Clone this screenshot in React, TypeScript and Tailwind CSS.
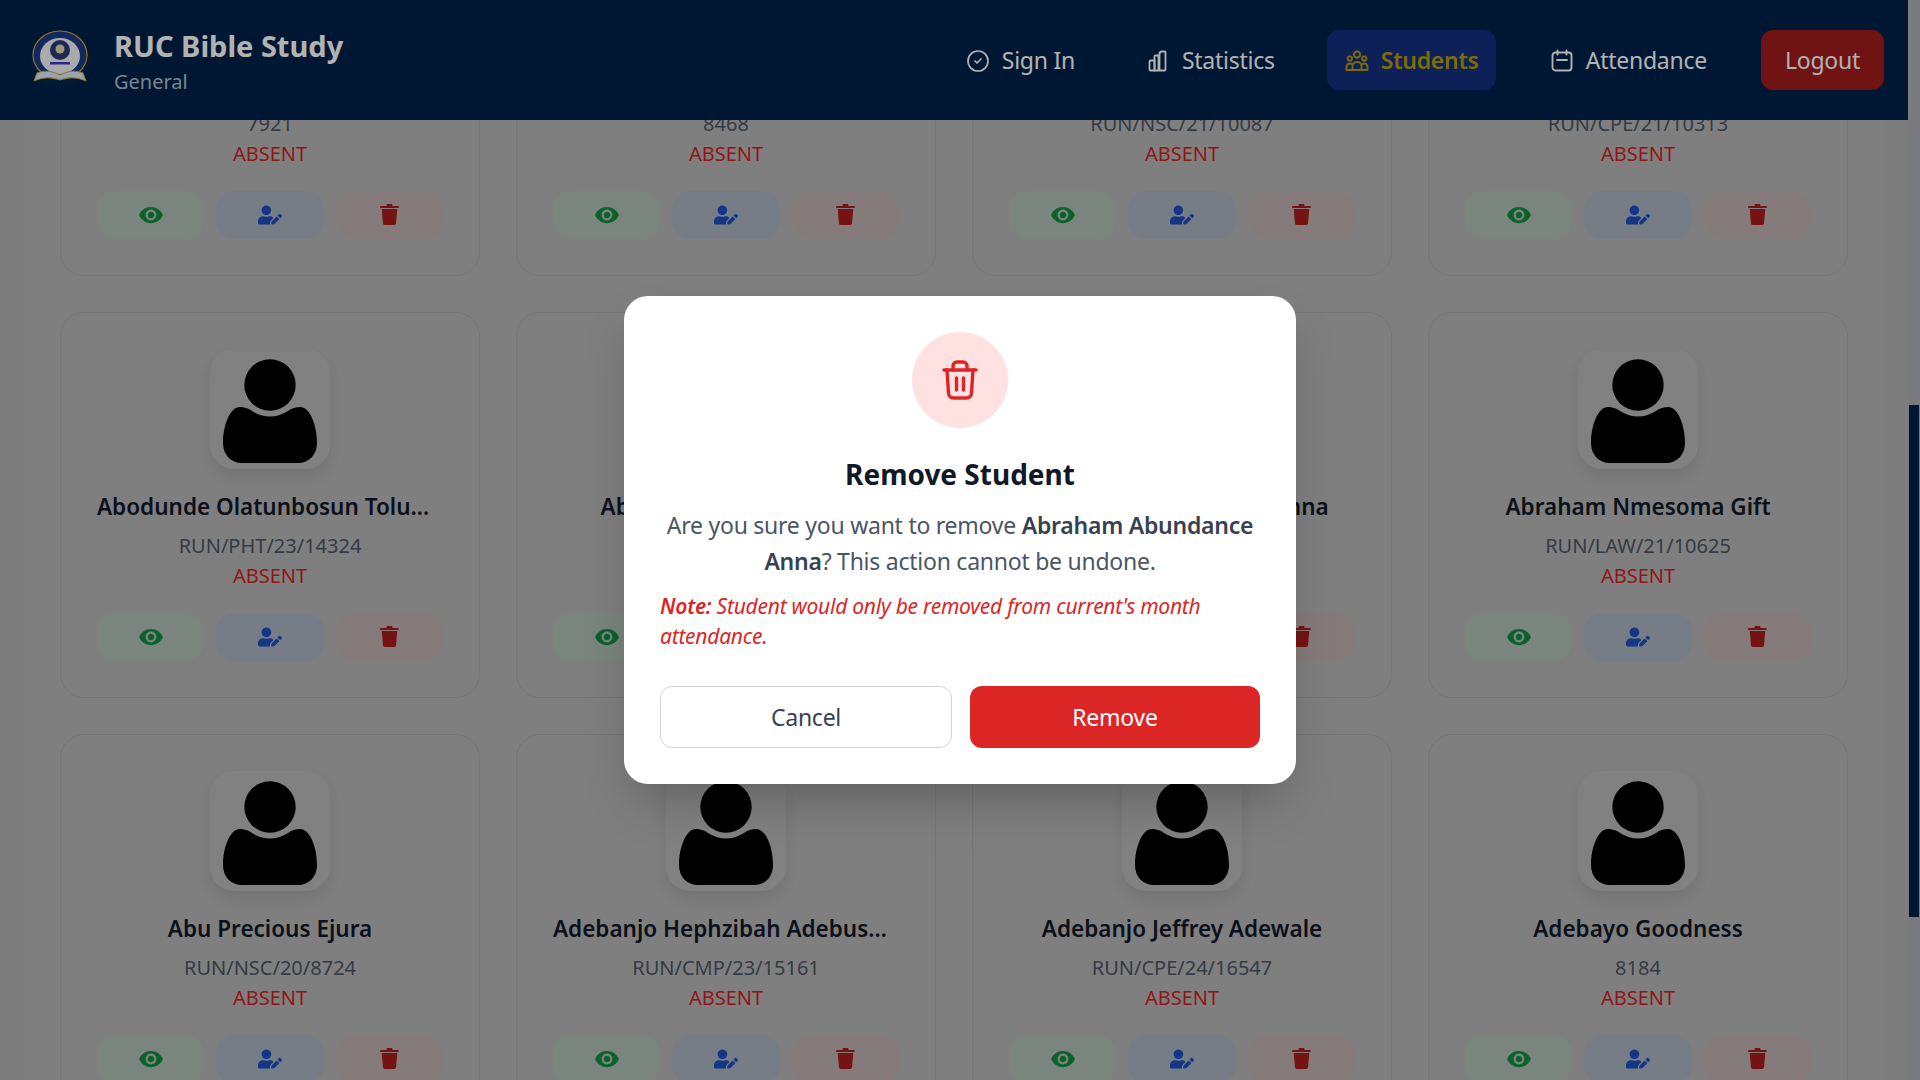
import { CircleCheck } from "lucide-react";
import { FaUserEdit } from "react-icons/fa";
import { MdVisibility } from "react-icons/md";

const students = [
  { name: "Abdullahi Grace", id: "7921" },
  { name: "Abel Daniel Ojo", id: "8468" },
  { name: "Abiodun Samuel", id: "RUN/NSC/21/10087" },
  { name: "Abiola Esther", id: "RUN/CPE/21/10313" },
  { name: "Abodunde Olatunbosun Toluwani", id: "RUN/PHT/23/14324" },
  { name: "Abiodun Samuel Ojobo", id: "RUN/MCM/22/12018" },
  { name: "Abraham Abundance Anna", id: "RUN/BCH/22/12764" },
  { name: "Abraham Nmesoma Gift", id: "RUN/LAW/21/10625" },
  { name: "Abu Precious Ejura", id: "RUN/NSC/20/8724" },
  { name: "Adebanjo Hephzibah Adebusola", id: "RUN/CMP/23/15161" },
  { name: "Adebanjo Jeffrey Adewale", id: "RUN/CPE/24/16547" },
  { name: "Adebayo Goodness", id: "8184" },
];

function Avatar() {
  return (
    <div className="mx-auto flex h-[120px] w-[120px] items-center justify-center rounded-3xl bg-[#b9b9b9] shadow-[0_8px_16px_rgba(0,0,0,0.1)]">
      <svg viewBox="0 0 96 108" className="h-[108px] w-[96px]" aria-hidden>
        <circle cx="48" cy="30" r="25.7" fill="#000" />
        <path
          d="M30 56Q48 67 66 56C70 53 74 52 78 52C88 52 95 70 95 88C95 100 87 108 76 108H20C9 108 1 100 1 88C1 70 8 52 18 52C22 52 26 53 30 56Z"
          fill="#000"
        />
      </svg>
    </div>
  );
}

function TrashSolid() {
  return (
    <svg viewBox="0 0 19 21" className="-mt-0.5 h-[21px] w-[19px]" fill="currentColor" aria-hidden>
      <path d="M6.5 1.2C6.5.5 7 0 7.7 0h3.6c.7 0 1.2.5 1.2 1.2V2h5.3c.6 0 1 .4 1 1s-.4 1-1 1H1C.4 4 0 3.6 0 3s.4-1 1-1h5.5z" />
      <path d="M1.8 5h15.4l-1.1 14c-.1 1.1-1 2-2.1 2H5c-1.1 0-2-.9-2.1-2z" />
    </svg>
  );
}

function StudentCard({ name, id }: { name: string; id: string }) {
  return (
    <div className="h-[386px] rounded-3xl border border-[#a9a9a9] p-9 text-center">
      <Avatar />
      <h3 className="mt-[23px] truncate text-[22.5px] leading-[30px] font-semibold text-[#111827]">{name}</h3>
      <p className="mt-2.5 text-xl leading-[27px] text-[#4b5563]">{id}</p>
      <p className="mt-0.5 text-xl leading-[30px] text-[#d02020]">ABSENT</p>
      <div className="mt-[22px] flex gap-3">
        <button className="flex h-12 flex-1 items-center justify-center rounded-[18px] bg-[#aebfb4] text-[#118a40]">
          <MdVisibility size={26} />
        </button>
        <button className="flex h-12 flex-1 items-center justify-center rounded-[18px] bg-[#a9b3c2] text-[#1d4fbf]">
          <FaUserEdit size={24} />
        </button>
        <button className="flex h-12 flex-1 items-center justify-center rounded-[18px] bg-[#c1b1b1] text-[#a81c1c]">
          <TrashSolid />
        </button>
      </div>
    </div>
  );
}

function NavItem({ icon, label, active, className }: { icon: React.ReactNode; label: string; active?: boolean; className?: string }) {
  return (
    <a
      className={
        (active
          ? "flex h-[60px] items-center gap-3 rounded-xl bg-[#14307e] pt-px pr-[17px] pl-[18px] text-[23px] font-semibold tracking-[-0.25px] text-[#b39a0c] "
          : "flex h-[60px] items-center gap-3 rounded-xl px-6 pt-px text-[23px] tracking-[-0.25px] text-white ") + (className ?? "")
      }
    >
      {icon}
      {label}
    </a>
  );
}

const StatsIcon = (
  <svg viewBox="0 0 24 24" className="h-6 w-6" fill="none" stroke="currentColor" strokeWidth="1.8" strokeLinejoin="round" aria-hidden>
    <path d="M3.5 12.5c0-.6.4-1 1-1h4v10h-4c-.6 0-1-.4-1-1z" />
    <path d="M8.5 7.5c0-.6.4-1 1-1h3v15h-4z" />
    <path d="M14.5 3.5c0-.6.4-1 1-1h3c.6 0 1 .4 1 1v17c0 .6-.4 1-1 1h-5V3.5z" />
  </svg>
);

const UsersIcon = (
  <svg viewBox="0 0 24 24" className="h-6 w-6" fill="none" stroke="currentColor" strokeWidth="1.9" strokeLinejoin="round" aria-hidden>
    <circle cx="12" cy="5.6" r="3.1" />
    <circle cx="4.8" cy="9.6" r="2.2" />
    <circle cx="19.2" cy="9.6" r="2.2" />
    <path d="M7.5 21v-4c0-2.2 1.8-4 4.5-4s4.500 1.800 4.500 4v4z" />
    <path d="M7.500 21H1.500v-3c0-2 1.400-3.500 3.400-3.500 1 0 2 .4 2.600 1" />
    <path d="M16.500 21h6v-3c0-2-1.400-3.500-3.400-3.500-1 0-2 .4-2.600 1" />
  </svg>
);

const CalendarIcon = (
  <svg viewBox="0 0 24 24" className="h-6 w-6" fill="none" stroke="currentColor" strokeWidth="1.9" strokeLinecap="round" aria-hidden>
    <rect x="2.500" y="3.500" width="19" height="18" rx="3" />
    <path d="M7.500 1.500v4M16.500 1.500v4M7 11h10" />
  </svg>
);

function Logo() {
  return (
    <svg viewBox="0 0 60 60" className="h-[60px] w-[60px]" aria-hidden>
      <circle cx="30" cy="30" r="29" fill="#00264f" />
      <ellipse cx="30" cy="25" rx="27" ry="24" fill="#1e3a8a" stroke="#d4a72c" strokeWidth="1.200" />
      <ellipse cx="30" cy="26" rx="20" ry="18" fill="#f3f4f6" />
      <circle cx="30" cy="20" r="10" fill="#2b3a7a" />
      <circle cx="30" cy="19" r="4.500" fill="#e5dcae" />
      <path d="M20 32h20v2.500H20z" fill="#4338ca" />
      <path d="M4 51c9-4 19-4 26-1 7-3 17-3 26 1l-3-8c-8-3-16-2-23 2-7-4-15-5-23-2z" fill="#dbeafe" stroke="#d4a72c" strokeWidth="1" />
    </svg>
  );
}

export default function App() {
  return (
    <div className="relative flex h-screen overflow-hidden font-['Noto_Sans',sans-serif]">
      <div className="flex min-w-0 flex-1 flex-col">
        <header className="z-10 flex h-[120px] shrink-0 items-center justify-between bg-[#002149] pr-6 pl-[30px]">
          <div className="flex items-center gap-6">
            <Logo />
            <div className="pt-1">
              <div className="text-[29px] leading-9 font-bold text-white">RUC Bible Study</div>
              <div className="mt-1 text-xl leading-7 text-[#b0c0d4]">General</div>
            </div>
          </div>
          <nav className="flex items-center gap-[30px]">
            <NavItem icon={<CircleCheck size={24} strokeWidth={1.7} />} label="Sign In" className="-mr-[7px]" />
            <NavItem icon={StatsIcon} label="Statistics" className="-mr-0.5" />
            <NavItem icon={UsersIcon} label="Students" active />
            <NavItem icon={CalendarIcon} label="Attendance" />
            <button className="flex h-[60px] items-center rounded-xl bg-[#a01c1c] px-6 pt-px text-[23px] tracking-[-0.25px] text-white">
              Logout
            </button>
          </nav>
        </header>

        <main className="min-h-0 flex-1 overflow-hidden bg-[#b4b4b4] px-6">
          <div className="-mt-[230px] grid grid-cols-4 gap-9 bg-[#b7b7b7] px-9 pb-9">
            {students.map((s) => (
              <StudentCard key={s.name} name={s.name} id={s.id} />
            ))}
          </div>
        </main>
      </div>

      <aside className="w-3 shrink-0 bg-[#aeb1b7] pt-[405px]">
        <div className="mx-auto h-[512px] w-2.5 bg-[#002149]" />
      </aside>

      {/* dimmed backdrop and confirmation dialog */}
      <div className="absolute inset-0 z-20 flex items-start justify-center bg-black/30 pt-[296px]">
        <div className="h-[488px] w-[672px] rounded-3xl bg-white p-9 text-center shadow-2xl">
          <div className="mx-auto flex h-24 w-24 items-center justify-center rounded-full bg-[#fee2e2] text-[#dc2626]">
            <svg viewBox="0 0 36 40" className="h-10 w-9" fill="none" stroke="currentColor" strokeWidth="3.400" strokeLinecap="round" strokeLinejoin="round" aria-hidden>
              <path d="M2 10h32" />
              <path d="M11 10V6a4 4 0 0 1 4-4h6a4 4 0 0 1 4 4v4" />
              <path d="M5 10l1.500 23a5 5 0 0 0 5 5h13a5 5 0 0 0 5-5L31 10" />
              <path d="M14.500 18v12M21.500 18v12" />
            </svg>
          </div>
          <h2 className="mt-7 text-[28px] leading-9 font-bold text-[#111827]">Remove Student</h2>
          <p className="mt-[15px] text-[23px] leading-9 tracking-[-0.25px] text-[#4b5563]">
            Are you sure you want to remove <strong className="font-semibold text-[#374151]">Abraham Abundance Anna</strong>? This action cannot be undone.
          </p>
          <p className="mt-3 text-left text-[21px] leading-[30px] tracking-[-0.25px] text-[#dc2626] italic">
            <strong className="font-semibold">Note:</strong> Student would only be removed from current's month attendance.
          </p>
          <div className="mt-[35px] flex gap-[18px]">
            <button className="h-[62px] flex-1 rounded-xl border border-[#d1d5db] bg-white pt-px text-[23px] tracking-[-0.25px] text-[#374151]">
              Cancel
            </button>
            <button className="h-[62px] flex-1 rounded-xl bg-[#dc2626] pt-px text-[23px] tracking-[-0.25px] text-white">Remove</button>
          </div>
        </div>
      </div>
    </div>
  );
}
